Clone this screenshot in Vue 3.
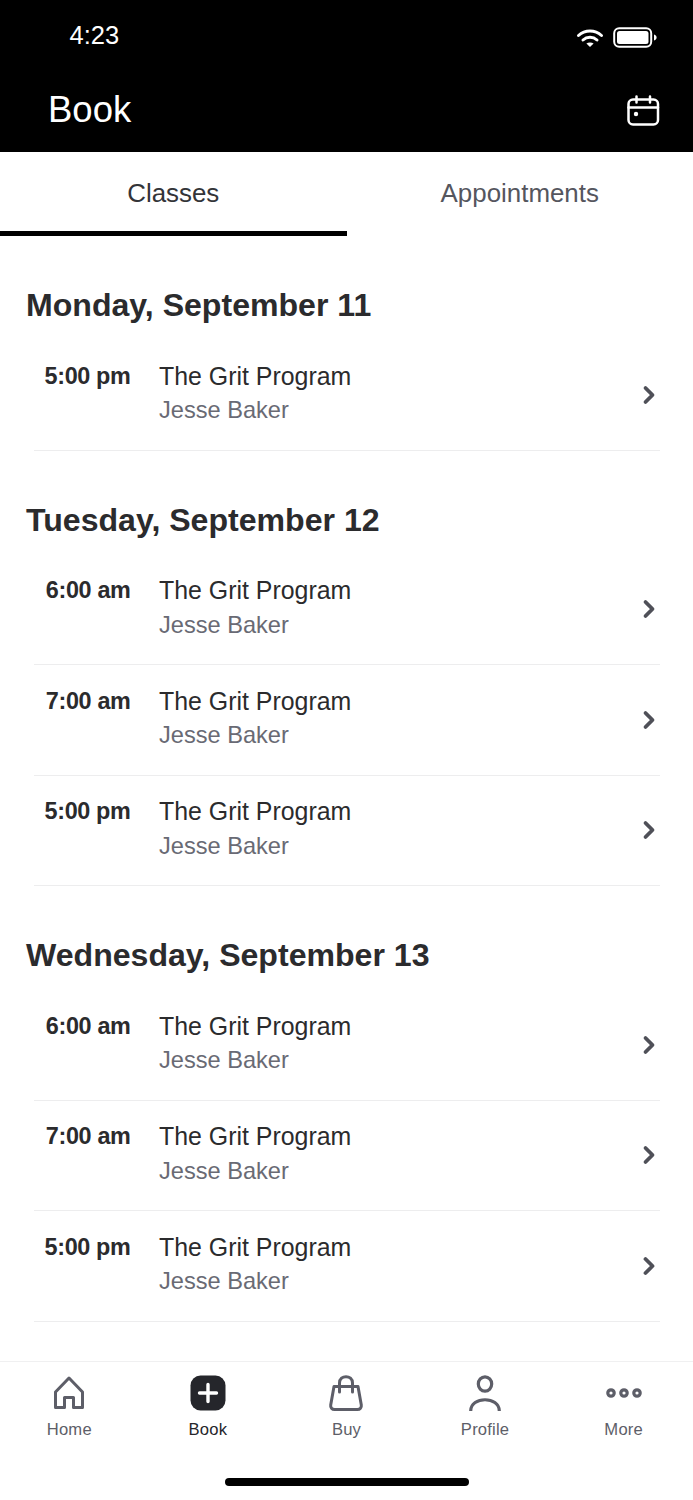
<script setup>
const days = [
  { label: 'Monday, September 11', times: ['5:00 pm'] },
  { label: 'Tuesday, September 12', times: ['6:00 am', '7:00 am', '5:00 pm'] },
  { label: 'Wednesday, September 13', times: ['6:00 am', '7:00 am', '5:00 pm'] },
]
</script>

<template>
  <div class="page">
    <header class="top">
      <div class="status">
        <span class="clock">4:23</span>
        <div class="status-icons">
          <svg width="28" height="20" viewBox="0 0 28 20" fill="none" stroke="#fff" stroke-width="3" stroke-linecap="round">
            <path d="M2.5 7.5C9 1.6 19 1.6 25.5 7.5" />
            <path d="M7 12c4-3.6 10-3.6 14 0" />
            <path d="M14 19l-3.6-3.4c2-1.6 5.2-1.6 7.2 0z" fill="#fff" stroke="none" />
          </svg>
          <svg width="44" height="22" viewBox="0 0 44 22" fill="none">
            <rect x="1.2" y="1.2" width="37" height="18.6" rx="5" stroke="#fff" stroke-width="2" />
            <rect x="4" y="4" width="31.5" height="13" rx="2.5" fill="#fff" />
            <path d="M41 7.5c1.8.5 2.6 1.6 2.6 3s-.8 2.5-2.6 3z" fill="#fff" />
          </svg>
        </div>
      </div>
      <div class="titlebar">
        <h1>Book</h1>
        <svg width="33" height="31" viewBox="0 0 33 31" fill="none" stroke="#fff" stroke-width="2.5" stroke-linecap="round">
          <rect x="1.5" y="4.5" width="29.5" height="25" rx="4.5" />
          <path d="M1.5 12.5h29.5M9.5 1.5v6M23 1.5v6" />
          <circle cx="9" cy="19" r="2.2" fill="#fff" stroke="none" />
        </svg>
      </div>
    </header>

    <nav class="tabs">
      <div class="tab active">Classes</div>
      <div class="tab">Appointments</div>
    </nav>

    <main class="list">
      <section v-for="day in days" :key="day.label" class="day">
        <h2>{{ day.label }}</h2>
        <div v-for="(time, i) in day.times" :key="i" class="row">
          <div class="time">{{ time }}</div>
          <div class="info">
            <div class="name">The Grit Program</div>
            <div class="coach">Jesse Baker</div>
          </div>
          <svg class="chev" width="14" height="20" viewBox="0 0 14 20" fill="none" stroke="#4f5058" stroke-width="3.8" stroke-linecap="round" stroke-linejoin="round">
            <path d="M3.5 3L10.5 10L3.5 17" />
          </svg>
        </div>
      </section>
    </main>

    <footer class="bottom">
      <div class="nav">
        <div class="nav-item">
          <svg width="36" height="36" viewBox="0 0 36 36" fill="none" stroke="#5d5e68" stroke-width="3" stroke-linejoin="round">
            <path d="M4.5 32.5V17L18 3l13.5 14v15.5H22.5v-10h-9v10z" />
          </svg>
          <span>Home</span>
        </div>
        <div class="nav-item current">
          <svg width="36" height="36" viewBox="0 0 36 36" fill="none">
            <rect x="0.5" y="0.5" width="35" height="35" rx="10" fill="#25262b" />
            <path d="M18 9.5v17M9.5 18h17" stroke="#fff" stroke-width="3.4" stroke-linecap="round" />
          </svg>
          <span>Book</span>
        </div>
        <div class="nav-item">
          <svg width="36" height="36" viewBox="0 0 36 36" fill="none" stroke="#5d5e68" stroke-width="3" stroke-linecap="round" stroke-linejoin="round">
            <path d="M6 11.5h24l3.3 18.500c.4 2.500-1.200 4.500-4 4.500H6.700c-2.800 0-4.400-2-4-4.500z" />
            <path d="M11.5 17V8c0-8.500 13-8.500 13 0v9" />
          </svg>
          <span>Buy</span>
        </div>
        <div class="nav-item">
          <svg width="36" height="36" viewBox="0 0 36 36" fill="none" stroke="#5d5e68" stroke-width="3.2">
            <ellipse cx="18" cy="9" rx="6.7" ry="7.2" />
            <path d="M3.7 36c0-15 28.600-15 28.600 0" />
          </svg>
          <span>Profile</span>
        </div>
        <div class="nav-item">
          <svg width="38" height="36" viewBox="0 0 38 36" fill="none" stroke="#5d5e68" stroke-width="3.2">
            <circle cx="6" cy="18" r="3.2" />
            <circle cx="19" cy="18" r="3.2" />
            <circle cx="32" cy="18" r="3.2" />
          </svg>
          <span>More</span>
        </div>
      </div>
      <div class="home-bar"></div>
    </footer>
  </div>
</template>

<style>
html, body { margin: 0; background: #fff; }
</style>

<style scoped>
.page {
  width: 693px;
  height: 1500px;
  display: flex;
  flex-direction: column;
  overflow: hidden;
  background: #fff;
  font-family: "Liberation Sans", Arial, sans-serif;
}
.top {
  height: 152px;
  flex: none;
  background: #000;
  color: #fff;
  box-sizing: border-box;
  padding: 0 33px 0 48px;
}
.status {
  height: 72px;
  display: flex;
  align-items: center;
  justify-content: space-between;
  padding-left: 21.5px;
}
.clock { font-size: 25.5px; margin-bottom: 2px; }
.status-icons { display: flex; align-items: center; gap: 9px; padding-top: 4px; margin-right: 3px; }
.titlebar {
  display: flex;
  align-items: center;
  justify-content: space-between;
  height: 72px;
  margin-top: 2px;
}
h1 { margin: 0; font-size: 36.5px; font-weight: 400; }
.tabs { display: flex; height: 84px; flex: none; }
.tab {
  width: 50%;
  box-sizing: border-box;
  padding-top: 25px;
  text-align: center;
  font-size: 25.9px;
  line-height: 32px;
  color: #55565e;
  border-bottom: 5px solid transparent;
}
.tab.active { color: #333438; border-bottom-color: #000; }
.list { flex: 1; min-height: 0; overflow: hidden; padding-top: 48px; }
.day { margin-bottom: 48px; }
h2 {
  margin: 0 0 14px;
  padding-left: 26px;
  font-size: 32.1px;
  line-height: 42px;
  font-weight: 700;
  color: #2b2b2d;
}
.row {
  height: 110.5px;
  box-sizing: border-box;
  margin: 0 33px 0 34px;
  padding-top: 20px;
  display: flex;
  align-items: flex-start;
  position: relative;
  border-bottom: 1px solid #ededee;
}
.time {
  width: 96.5px;
  flex: none;
  margin-top: -0.25px;
  text-align: right;
  font-size: 23.4px;
  letter-spacing: -0.35px;
  line-height: 32px;
  font-weight: 700;
  color: #2b2b2d;
}
.info { margin: -0.25px 0 0 28.5px; flex: 1; }
.name { font-size: 24.9px; line-height: 32px; color: #2b2b2d; }
.coach { font-size: 23.6px; line-height: 32px; margin-top: 2.25px; color: #696a74; }
.chev { position: absolute; right: 4px; top: 50%; margin-top: -10px; }
.bottom {
  height: 139px;
  flex: none;
  box-sizing: border-box;
  border-top: 1px solid #f0f0f1;
  background: #fff;
}
.nav { display: flex; padding-top: 13px; }
.nav-item {
  width: 20%;
  display: flex;
  flex-direction: column;
  align-items: center;
  font-size: 16.6px;
  letter-spacing: 0.2px;
  color: #5d5e68;
}
.nav-item svg { height: 36px; }
.nav-item span { margin-top: 8px; line-height: 22px; }
.nav-item.current { color: #25262b; }
.home-bar {
  width: 244px;
  height: 8px;
  border-radius: 4px;
  background: #000;
  margin: 37px auto 0;
}
</style>
